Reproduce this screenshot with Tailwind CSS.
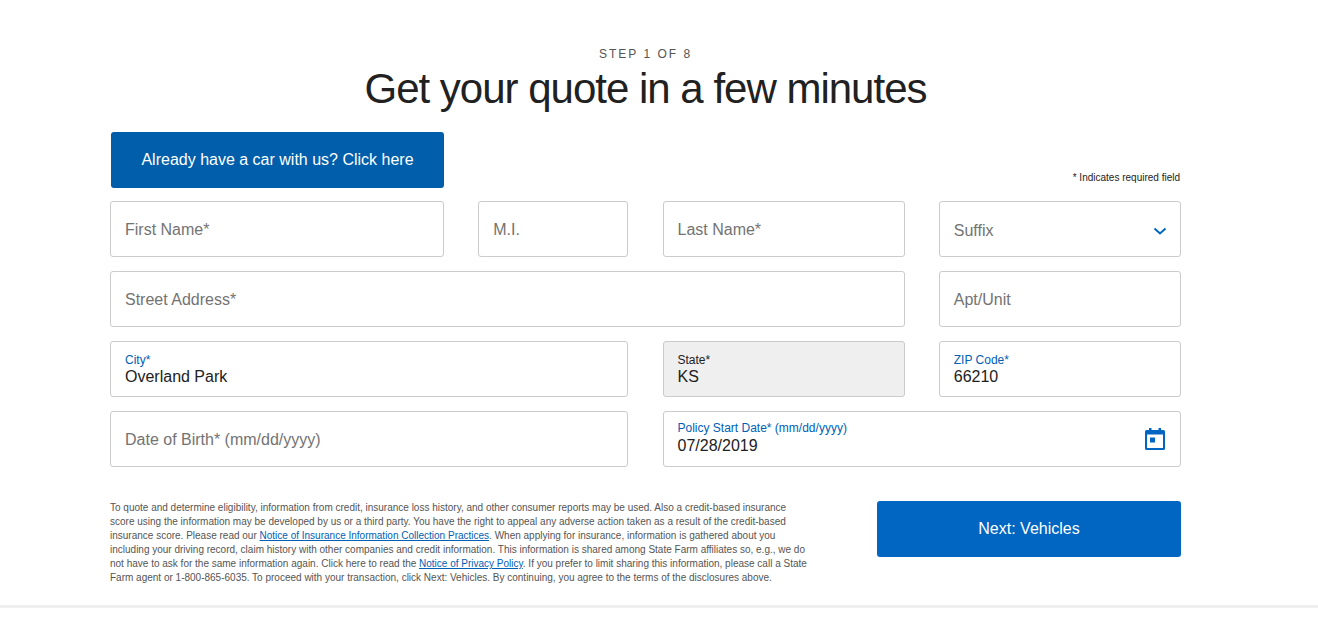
<!DOCTYPE html>
<html lang="en">
<head>
    <meta charset="UTF-8">
    <meta name="viewport" content="width=device-width, initial-scale=1.0">
    <title>Get your quote</title>
    <script src="https://cdn.jsdelivr.net/npm/@tailwindcss/browser@4"></script>
</head>
<body class="bg-white text-[#212121] font-['Liberation_Sans',Arial,sans-serif] h-[623px] overflow-hidden">
    <div class="w-[1071px] ml-[110px]">
        <!-- Heading -->
        <div class="pt-[47px] text-center">
            <p class="text-[12px] leading-[14px] tracking-[2px] text-[#555]">STEP 1 OF 8</p>
            <h1 class="text-[42px] leading-[48px] mt-[4px] mb-[-1px] tracking-[-1px]">Get your quote in a few minutes</h1>
        </div>

        <!-- Existing customer -->
        <div class="flex justify-between items-end mt-[20px] mb-[13px]">
            <button class="w-[333px] h-[56px] ml-[1px] bg-[#005eab] text-white text-[16px] rounded-[3px]">Already have a car with us? Click here</button>
            <span class="text-[10px] leading-[11px] text-[#222] mb-[5px] mr-[1px]">* Indicates required field</span>
        </div>

        <!-- Form -->
        <div class="grid grid-cols-[334px_150px_242px_242px] gap-x-[34.25px] gap-y-[14px] text-[16px]">
            <div class="h-[56px] border border-[#cbcbcb] rounded-[3px] px-[14px] pt-[2px] flex items-center text-[#737373]">First Name*</div>
            <div class="h-[56px] border border-[#cbcbcb] rounded-[3px] px-[14px] pt-[2px] flex items-center text-[#737373]">M.I.</div>
            <div class="h-[56px] border border-[#cbcbcb] rounded-[3px] px-[14px] pt-[2px] flex items-center text-[#737373]">Last Name*</div>
            <div class="h-[56px] border border-[#cbcbcb] rounded-[3px] px-[14px] pt-[4px] flex items-center justify-between text-[#737373]">
                Suffix
                <svg class="w-[14px] h-[10px] mr-[-1px]" viewBox="0 0 14 10" fill="none" stroke="#0066c2" stroke-width="2"><path d="M1.5 2.500 7 7.500l5.500-5"/></svg>
            </div>

            <div class="col-span-3 h-[56px] border border-[#cbcbcb] rounded-[3px] px-[14px] pt-[2px] flex items-center text-[#737373]">Street Address*</div>
            <div class="h-[56px] border border-[#cbcbcb] rounded-[3px] px-[14px] pt-[2px] flex items-center text-[#737373]">Apt/Unit</div>

            <div class="col-span-2 h-[56px] border border-[#cbcbcb] rounded-[3px] px-[14px] pt-[11px]">
                <div class="text-[12px] leading-[14px] text-[#0060b5]">City*</div>
                <div class="leading-[18px] mt-[1px]">Overland Park</div>
            </div>
            <div class="h-[56px] border border-[#cbcbcb] rounded-[3px] px-[14px] pt-[11px] bg-[#efefef]">
                <div class="text-[12px] leading-[14px]">State*</div>
                <div class="leading-[18px] mt-[1px]">KS</div>
            </div>
            <div class="h-[56px] border border-[#cbcbcb] rounded-[3px] px-[14px] pt-[11px]">
                <div class="text-[12px] leading-[14px] text-[#0060b5]">ZIP Code*</div>
                <div class="leading-[18px] mt-[1px]">66210</div>
            </div>

            <div class="col-span-2 h-[56px] border border-[#cbcbcb] rounded-[3px] px-[14px] pt-[2px] flex items-center text-[#737373]">Date of Birth* (mm/dd/yyyy)</div>
            <div class="col-span-2 h-[56px] border border-[#cbcbcb] rounded-[3px] px-[14px] pt-[9px] flex justify-between">
                <div>
                    <div class="text-[12px] leading-[14px] text-[#0060b5]">Policy Start Date* (mm/dd/yyyy)</div>
                    <div class="leading-[18px] mt-[2px]">07/28/2019</div>
                </div>
                <svg class="w-[22px] h-[24px] mt-[6px]" viewBox="0 0 22 24" fill="#0066c2"><path fill-rule="evenodd" d="M5 1h2.500v2h7V1H17v2h2.500A1.500 1.500 0 0 1 21 4.500v17a1.500 1.500 0 0 1-1.500 1.500h-17A1.500 1.500 0 0 1 1 21.500v-17A1.500 1.500 0 0 1 2.500 3H5V1Zm-2 6.500V21h16V7.500H3Z"/><rect x="6" y="10.500" width="5" height="5"/></svg>
            </div>
        </div>

        <!-- Disclosure and next -->
        <div class="flex justify-between mt-[34px]">
            <p class="w-[700px] text-[10px] leading-[14px] text-[#555]">To quote and determine eligibility, information from credit, insurance loss history, and other consumer reports may be used. Also a credit-based insurance score using the information may be developed by us or a third party. You have the right to appeal any adverse action taken as a result of the credit-based insurance score. Please read our <a href="#" class="text-[#0060b5] underline">Notice of Insurance Information Collection Practices</a>. When applying for insurance, information is gathered about you including your driving record, claim history with other companies and credit information. This information is shared among State Farm affiliates so, e.g., we do not have to ask for the same information again. Click here to read the <a href="#" class="text-[#0060b5] underline">Notice of Privacy Policy</a>. If you prefer to limit sharing this information, please call a State Farm agent or 1-800-865-6035. To proceed with your transaction, click Next: Vehicles. By continuing, you agree to the terms of the disclosures above.</p>
            <button class="w-[304px] h-[56px] bg-[#0066c2] text-white text-[16px] rounded-[3px]">Next: Vehicles</button>
        </div>
    </div>

    <!-- Footer rule -->
    <div class="mt-[20px] h-[3px] bg-[#efefef]"></div>
</body>
</html>
